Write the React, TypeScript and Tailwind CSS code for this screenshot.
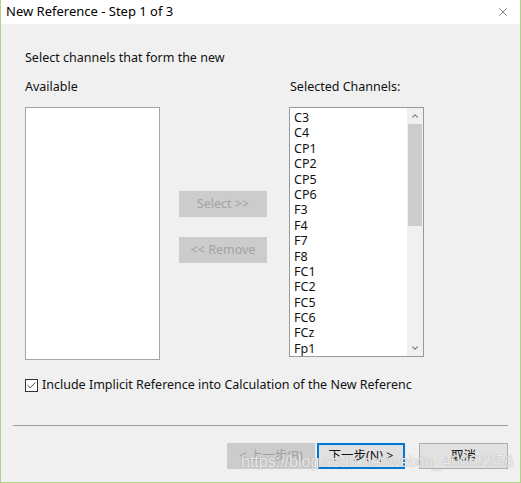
import { Check, ChevronDown, ChevronUp, X } from "lucide-react";

const channels = [
  "C3",
  "C4",
  "CP1",
  "CP2",
  "CP5",
  "CP6",
  "F3",
  "F4",
  "F7",
  "F8",
  "FC1",
  "FC2",
  "FC5",
  "FC6",
  "FCz",
  "Fp1",
];

const font = { fontFamily: '"Noto Sans", "Noto Sans CJK SC", sans-serif' };

export default function App() {
  return (
    <div
      className="relative flex h-[483px] w-[521px] flex-col border-x border-b border-[#aed585] text-[12.5px] text-[#111]"
      style={font}
    >
      {/* title bar */}
      <div className="flex h-[24px] items-center justify-between bg-white pl-[5px] pr-[10px]">
        <span className="text-[13px] text-black">New Reference - Step 1 of 3</span>
        <X className="size-[14px] text-[#555]" strokeWidth={1.2} />
      </div>

      <div className="flex flex-1 flex-col bg-[#f0f0f0]">
        <p className="mt-[26px] pl-[24px] leading-[16px]">Select channels that form the new</p>

        <div className="mt-[13px] flex pl-[24px]">
          {/* available */}
          <div className="flex w-[135px] flex-col">
            <span className="leading-[16px]">Available</span>
            <div className="mt-[12px] h-[253px] border border-[#a5a5a5] bg-white" />
          </div>

          {/* move buttons */}
          <div className="ml-[19px] flex w-[88px] flex-col gap-[20px] pt-[112px]">
            <div className="flex h-[26px] items-center justify-center bg-[#cccccc] text-[#a3a3a3]">
              Select &gt;&gt;
            </div>
            <div className="flex h-[26px] items-center justify-center bg-[#cccccc] text-[#a3a3a3]">
              &lt;&lt; Remove
            </div>
          </div>

          {/* selected */}
          <div className="ml-[22px] flex w-[135px] flex-col">
            <span className="pl-[1px] leading-[16px]">Selected Channels:</span>
            <div className="mt-[12px] flex h-[250px] border border-[#9a9a9a] bg-white">
              <ul className="flex-1 overflow-hidden pl-[4px] pt-[2px]">
                {channels.map((c) => (
                  <li key={c} className="h-[15.4px] leading-[15.4px]">
                    {c}
                  </li>
                ))}
              </ul>
              <div className="flex w-[16px] flex-col bg-[#f0f0f0]">
                <div className="flex h-[16px] items-center justify-center">
                  <ChevronUp className="size-[10px] text-[#606060]" strokeWidth={2.5} />
                </div>
                <div className="mx-[1px] h-[102px] bg-[#cdcdcd]" />
                <div className="flex-1" />
                <div className="flex h-[16px] items-center justify-center">
                  <ChevronDown className="size-[10px] text-[#606060]" strokeWidth={2.5} />
                </div>
              </div>
            </div>
          </div>
        </div>

        {/* checkbox */}
        <div className="mt-[17px] flex items-center gap-[4px] pl-[24px]">
          <div className="flex size-[13px] items-center justify-center border border-[#333] bg-white">
            <Check className="size-[11px] text-[#333]" strokeWidth={2} />
          </div>
          <span className="leading-[16px]">Include Implicit Reference into Calculation of the New Referenc</span>
        </div>

        <div className="mx-[12px] mt-[32px] h-px bg-[#a0a0a0]" />

        {/* wizard buttons */}
        <div className="mt-[17px] flex pl-[226px]">
          <div className="flex h-[26px] w-[88px] items-center justify-center bg-[#cccccc] text-[#a0a0a0]">
            &lt; 上一步(B)
          </div>
          <div className="ml-[2px] flex h-[26px] w-[88px] items-center justify-center border-2 border-[#0078d7] bg-[#e1e1e1]">
            下一步(N) &gt;
          </div>
          <div className="ml-[14px] flex h-[26px] w-[89px] items-center justify-center border border-[#adadad] bg-[#e1e1e1]">
            取消
          </div>
        </div>
      </div>

      {/* watermark */}
      <span
        className="pointer-events-none absolute left-[240px] top-[452px] text-[16px] leading-[20px] text-white/80"
        style={{ fontFamily: '"Liberation Sans", sans-serif', textShadow: "0 0 1px #8a8a8a" }}
      >
        https://blog.csdn.net/weixin_40062256
      </span>
    </div>
  );
}
